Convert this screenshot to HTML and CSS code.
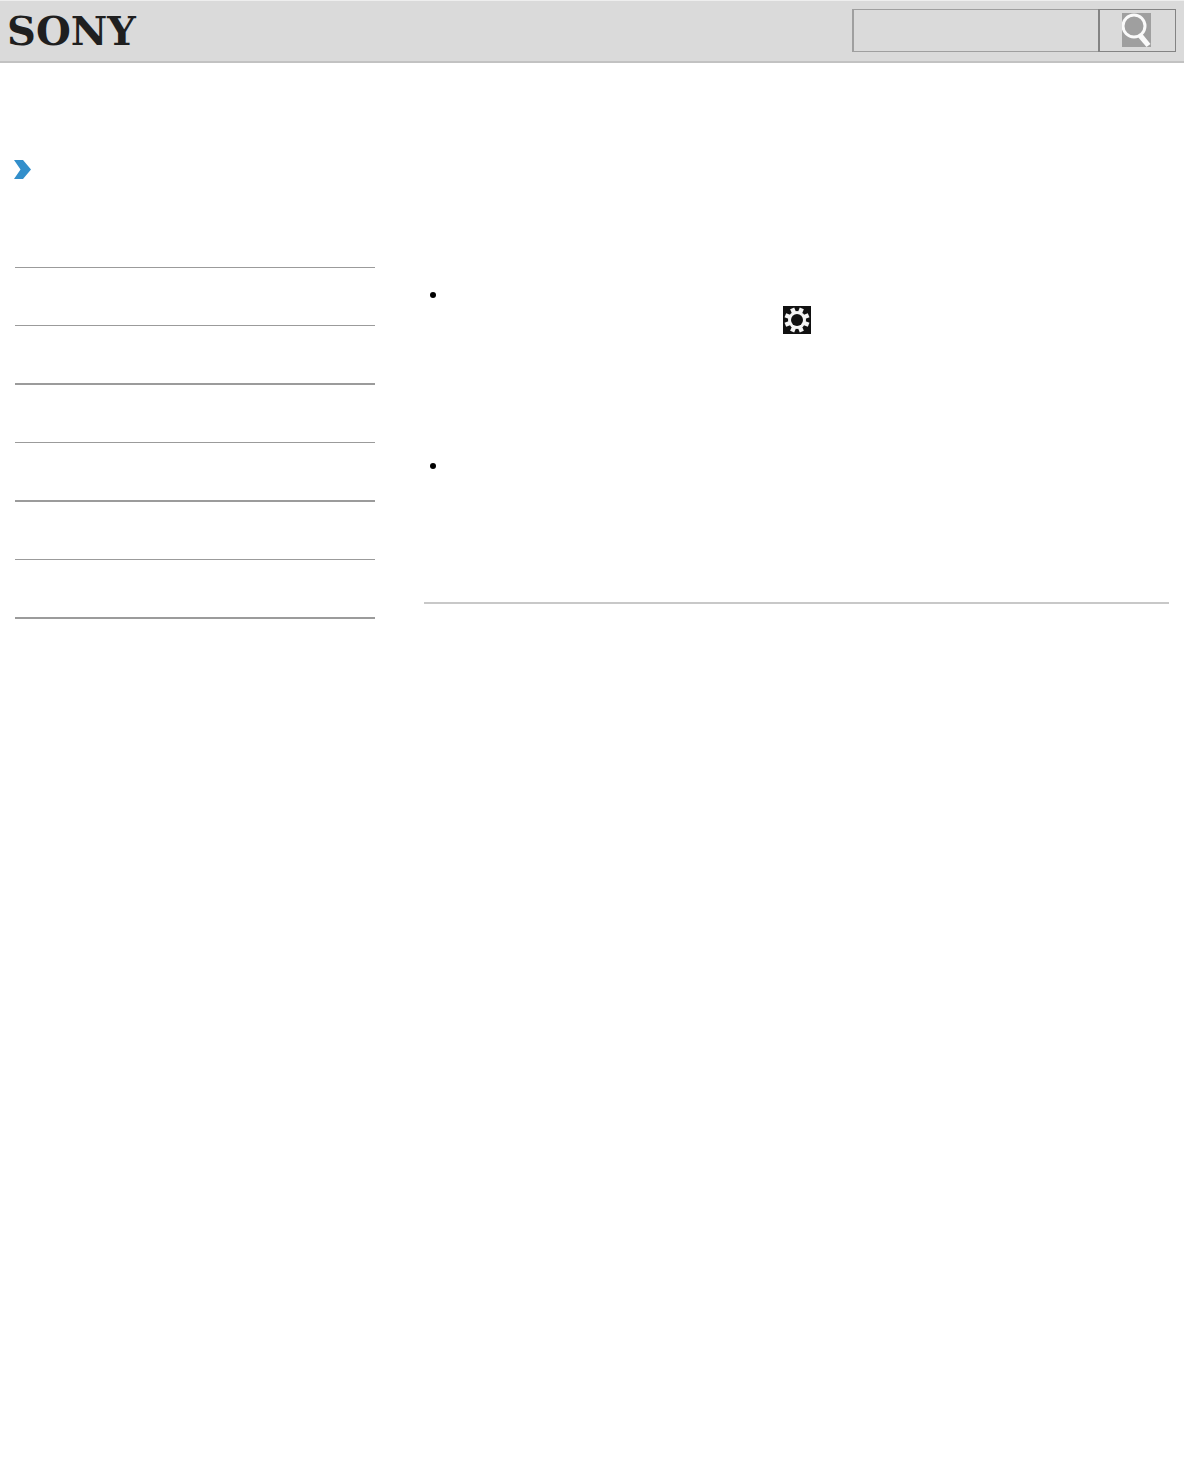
FILE: index.html
```html
<!DOCTYPE html>
<html lang="en">
  <head>
    <meta charset="UTF-8" />
    <meta name="viewport" content="width=device-width, initial-scale=1.0" />
    <title>SONY</title>
    <link rel="stylesheet" href="styles.css">
  </head>
  <body>
    <header class="header">
      <div class="logo">SONY</div>
      <form class="search">
        <input type="text" class="search-box" aria-label="Search" />
        <button type="button" class="search-button" aria-label="Search">
          <svg width="29" height="34" viewBox="0 0 29 34">
            <rect width="29" height="34" fill="#9f9f9f" />
            <circle cx="12" cy="13" r="11" fill="none" stroke="#fafafa" stroke-width="3" />
            <path d="M15.5 23.5 L20 20.5 L28.5 31 L24.5 34 Z" fill="#fafafa" />
          </svg>
        </button>
      </form>
    </header>

    <div class="breadcrumb">
      <svg width="17" height="20" viewBox="0 0 17 20">
        <path d="M0 0 H9 L17 9.5 L9 19 H0 L6.5 9.5 Z" fill="#338fcb" />
      </svg>
    </div>

    <div class="container">
      <nav class="side-menu">
        <ul>
          <li></li>
          <li></li>
          <li></li>
          <li></li>
          <li></li>
          <li></li>
        </ul>
      </nav>

      <main class="content">
        <ul class="steps">
          <li>
            <p>&nbsp;</p>
            <p class="charm">
              <svg width="28" height="28" viewBox="0 0 28 28">
                <rect width="28" height="28" fill="#111" />
                <g transform="translate(14 14)">
                  <g fill="#f5f5f5">
                    <path d="M-2.2 -7 V-12.6 H2.2 V-7 Z" transform="rotate(22.5)" />
                    <path d="M-2.2 -7 V-12.6 H2.2 V-7 Z" transform="rotate(67.5)" />
                    <path d="M-2.2 -7 V-12.6 H2.2 V-7 Z" transform="rotate(112.5)" />
                    <path d="M-2.2 -7 V-12.6 H2.2 V-7 Z" transform="rotate(157.5)" />
                    <path d="M-2.2 -7 V-12.6 H2.2 V-7 Z" transform="rotate(202.5)" />
                    <path d="M-2.2 -7 V-12.6 H2.2 V-7 Z" transform="rotate(247.5)" />
                    <path d="M-2.2 -7 V-12.6 H2.2 V-7 Z" transform="rotate(292.5)" />
                    <path d="M-2.2 -7 V-12.6 H2.2 V-7 Z" transform="rotate(337.5)" />
                    <circle r="9" />
                  </g>
                  <circle r="6" fill="#111" />
                </g>
              </svg>
            </p>
          </li>
          <li><p>&nbsp;</p></li>
        </ul>
        <hr class="divider" />
      </main>
    </div>
  </body>
</html>
```

FILE: styles.css
```css
body {
  margin: 0;
  background-color: #fff;
  color: #000;
  font-family: "Liberation Sans", Arial, sans-serif;
  font-size: 20px;
  line-height: 24px;
}

ul,
p {
  margin: 0;
  padding: 0;
}

svg {
  display: block;
}

.header {
  display: flex;
  justify-content: space-between;
  align-items: center;
  padding: 8px 8px 9px 7px;
  border-top: 1px solid #eee;
  border-bottom: 2px solid #c2c2c2;
  background-color: #dadada;
}

.logo {
  color: #1f1f1f;
  font-family: "DejaVu Serif", serif;
  font-size: 40px;
  font-weight: bold;
  line-height: 40px;
}

.search {
  display: flex;
  height: 43px;
}

.search-box {
  box-sizing: border-box;
  width: 246px;
  padding: 0 8px;
  border: 1px solid #9f9f9f;
  border-width: 1px 0 1px 2px;
  border-radius: 0;
  background: transparent;
  font-size: 20px;
}

.search-button {
  display: flex;
  justify-content: center;
  align-items: center;
  box-sizing: border-box;
  width: 78px;
  padding: 0 2px 2px 0;
  border: 1px solid #838383;
  border-left-width: 2px;
  background: transparent;
  cursor: pointer;
}

.breadcrumb {
  padding: 97px 14px 0;
}

.container {
  display: grid;
  grid-template-columns: 360px 1fr;
  gap: 49px;
  padding: 87px 15px 0;
}

.side-menu ul {
  border-top: 1px solid #9b9b9b;
  list-style: none;
}

.side-menu li {
  height: 57px;
  border-bottom: 1px solid #9b9b9b;
}

.side-menu li:nth-child(even) {
  border-bottom-width: 2px;
}

.content {
  padding-top: 15px;
}

.steps {
  padding-left: 25px;
}

.steps li {
  min-height: 147px;
  margin-bottom: 24px;
}

.steps li:last-child {
  min-height: 125px;
}

.charm {
  padding-left: 334px;
}

.divider {
  margin: 0;
  border: 0;
  border-top: 2px solid #c8c8c8;
}
```
